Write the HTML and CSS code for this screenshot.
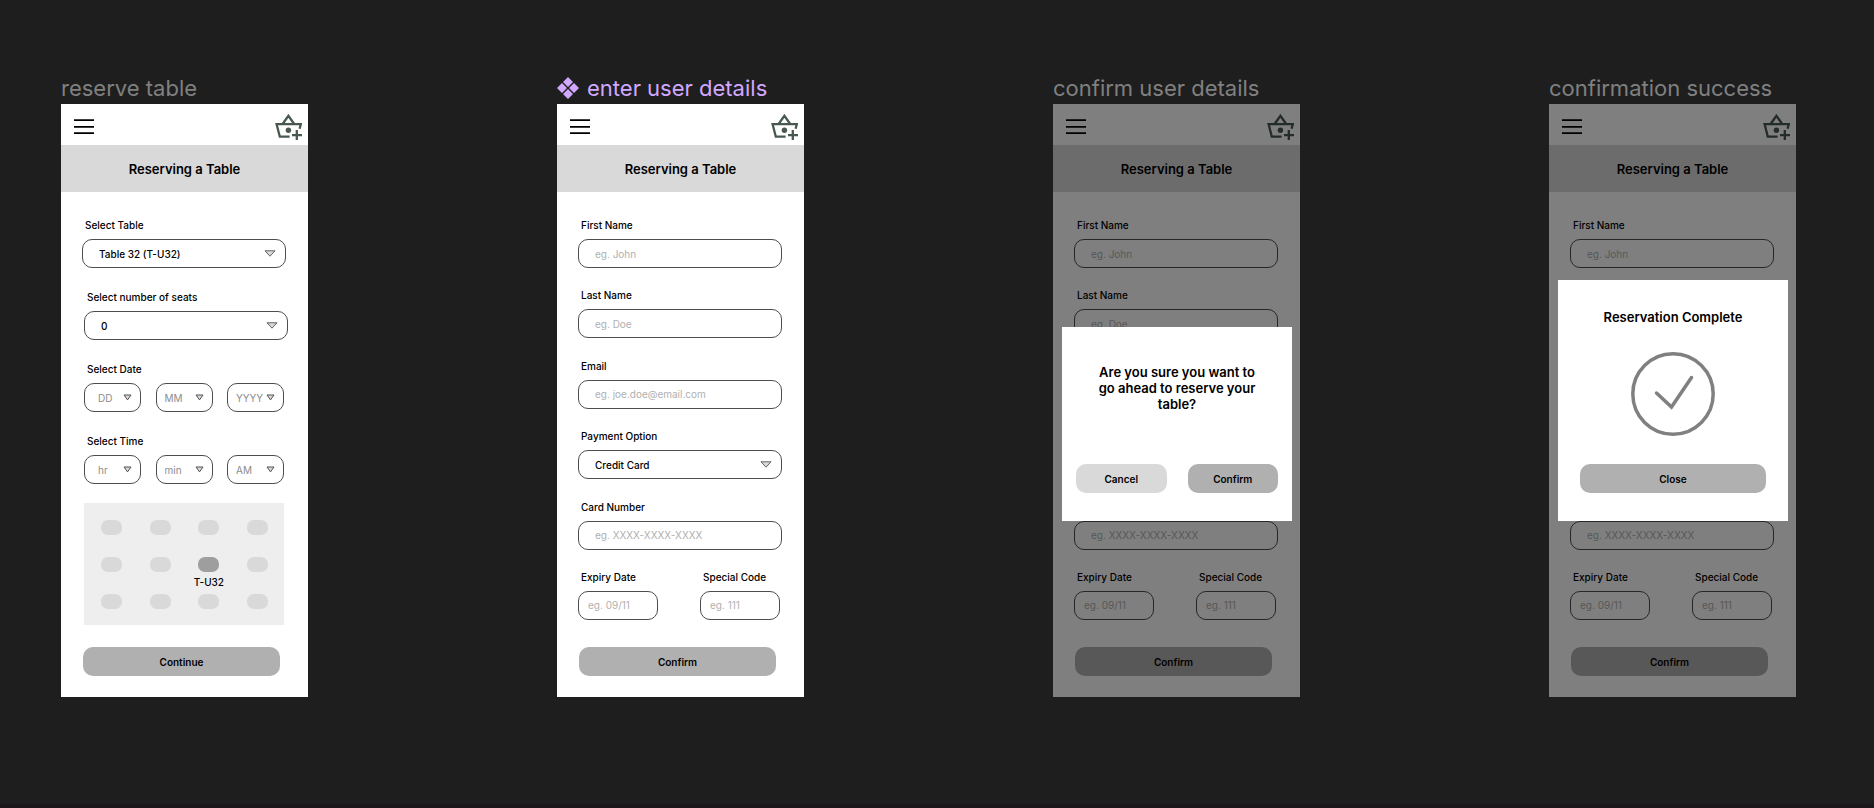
FILE: index.html
```html
<!DOCTYPE html>
<html lang="en">
<head>
<meta charset="utf-8">
<meta name="viewport" content="width=device-width, initial-scale=1">
<title>Table reservation flow</title>
<link rel="stylesheet" href="styles.css">
</head>
<body>
<svg class="sprite" aria-hidden="true">
  <symbol id="menu" viewBox="0 0 20 16"><path d="M0 1.2h20M0 7.800h20M0 14.2h20" fill="none" stroke="#000" stroke-width="1.700"/></symbol>
  <symbol id="basket" viewBox="0 0 27 26"><g fill="none" stroke="#48594f" stroke-width="2.300"><path d="M14.6 22.6H4.8L1.6 10.2h24.2l-1.2 4.6"/><path d="M7.6 10l5.8-8.2L19.2 10"/><path d="M21.8 16v10M17 21.2h10"/></g><circle cx="13.4" cy="16.2" r="2.700" fill="#48594f"/></symbol>
  <symbol id="arrow" viewBox="0 0 12 7"><path d="M1 .8h10L6 6.2z" fill="#d9d9d9" stroke="#555" stroke-width=".9"/></symbol>
  <symbol id="arrow-small" viewBox="0 0 9 7"><path d="M1 1h7L4.500 5.900z" fill="#d9d9d9" stroke="#444" stroke-width=".9"/></symbol>
</svg>
<main class="canvas">

  <section class="board">
    <h2 class="board-name">reserve table</h2>
    <div class="screen">
      <header class="topbar">
        <button class="icon-button" aria-label="Menu"><svg class="menu-icon"><use href="#menu"/></svg></button>
        <button class="icon-button" aria-label="Add to basket"><svg class="basket-icon"><use href="#basket"/></svg></button>
      </header>
      <h1 class="banner">Reserving a Table</h1>
      <form class="form">
        <div class="fields roomy">
          <div class="field"><label for="table">Select Table</label>
            <div class="pick"><select id="table" class="box"><option>Table 32 (T-U32)</option></select><svg class="arrow"><use href="#arrow"/></svg></div></div>
          <div class="field inset"><label for="seats">Select number of seats</label>
            <div class="pick"><select id="seats" class="box"><option>0</option></select><svg class="arrow"><use href="#arrow"/></svg></div></div>
          <div class="field inset"><label for="day">Select Date</label>
            <div class="trio">
              <div class="pick small"><select id="day" class="box"><option>DD</option></select><svg class="arrow"><use href="#arrow-small"/></svg></div>
              <div class="pick small"><select class="box" aria-label="Month"><option>MM</option></select><svg class="arrow"><use href="#arrow-small"/></svg></div>
              <div class="pick small"><select class="box" aria-label="Year"><option>YYYY</option></select><svg class="arrow"><use href="#arrow-small"/></svg></div>
            </div></div>
          <div class="field inset"><label for="hour">Select Time</label>
            <div class="trio">
              <div class="pick small"><select id="hour" class="box"><option>hr</option></select><svg class="arrow"><use href="#arrow-small"/></svg></div>
              <div class="pick small"><select class="box" aria-label="Minute"><option>min</option></select><svg class="arrow"><use href="#arrow-small"/></svg></div>
              <div class="pick small"><select class="box" aria-label="AM or PM"><option>AM</option></select><svg class="arrow"><use href="#arrow-small"/></svg></div>
            </div></div>
        </div>
        <div class="seat-map">
          <span class="seat"></span><span class="seat"></span><span class="seat"></span><span class="seat"></span>
          <span class="seat"></span><span class="seat"></span><span class="seat chosen"><span class="seat-name">T-U32</span></span><span class="seat"></span>
          <span class="seat"></span><span class="seat"></span><span class="seat"></span><span class="seat"></span>
        </div>
        <button type="button" class="action submit">Continue</button>
      </form>
    </div>
  </section>

  <section class="board">
    <h2 class="board-name component"><svg class="component-icon" viewBox="0 0 22 22"><path d="M11 0l5 5-5 5-5-5zM11 12l5 5-5 5-5-5zM5 6l5 5-5 5-5-5zM17 6l5 5-5 5-5-5z" fill="#d2a8ff"/></svg>enter user details</h2>
    <div class="screen">
      <header class="topbar">
        <button class="icon-button" aria-label="Menu"><svg class="menu-icon"><use href="#menu"/></svg></button>
        <button class="icon-button" aria-label="Add to basket"><svg class="basket-icon"><use href="#basket"/></svg></button>
      </header>
      <h1 class="banner">Reserving a Table</h1>
      <form class="form">
        <div class="fields">
          <div class="field"><label for="first-a">First Name</label><input id="first-a" class="box" placeholder="eg. John"></div>
          <div class="field"><label for="last-a">Last Name</label><input id="last-a" class="box" placeholder="eg. Doe"></div>
          <div class="field"><label for="email-a">Email</label><input id="email-a" class="box" placeholder="eg. joe.doe@email.com"></div>
          <div class="field"><label for="pay-a">Payment Option</label>
            <div class="pick"><select id="pay-a" class="box"><option>Credit Card</option></select><svg class="arrow"><use href="#arrow"/></svg></div></div>
          <div class="field"><label for="card-a">Card Number</label><input id="card-a" class="box" placeholder="eg. XXXX-XXXX-XXXX"></div>
          <div class="pair">
            <div class="field"><label for="expiry-a">Expiry Date</label><input id="expiry-a" class="box" placeholder="eg. 09/11"></div>
            <div class="field"><label for="code-a">Special Code</label><input id="code-a" class="box" placeholder="eg. 111"></div>
          </div>
        </div>
        <button type="button" class="action submit">Confirm</button>
      </form>
    </div>
  </section>

  <section class="board">
    <h2 class="board-name">confirm user details</h2>
    <div class="screen">
      <header class="topbar">
        <button class="icon-button" aria-label="Menu"><svg class="menu-icon"><use href="#menu"/></svg></button>
        <button class="icon-button" aria-label="Add to basket"><svg class="basket-icon"><use href="#basket"/></svg></button>
      </header>
      <h1 class="banner">Reserving a Table</h1>
      <form class="form">
        <div class="fields">
          <div class="field"><label for="first-b">First Name</label><input id="first-b" class="box" placeholder="eg. John"></div>
          <div class="field"><label for="last-b">Last Name</label><input id="last-b" class="box" placeholder="eg. Doe"></div>
          <div class="field"><label for="email-b">Email</label><input id="email-b" class="box" placeholder="eg. joe.doe@email.com"></div>
          <div class="field"><label for="pay-b">Payment Option</label>
            <div class="pick"><select id="pay-b" class="box"><option>Credit Card</option></select><svg class="arrow"><use href="#arrow"/></svg></div></div>
          <div class="field"><label for="card-b">Card Number</label><input id="card-b" class="box" placeholder="eg. XXXX-XXXX-XXXX"></div>
          <div class="pair">
            <div class="field"><label for="expiry-b">Expiry Date</label><input id="expiry-b" class="box" placeholder="eg. 09/11"></div>
            <div class="field"><label for="code-b">Special Code</label><input id="code-b" class="box" placeholder="eg. 111"></div>
          </div>
        </div>
        <button type="button" class="action submit">Confirm</button>
      </form>
      <div class="overlay"></div>
      <div class="modal ask" role="dialog" aria-labelledby="ask-title">
        <h3 id="ask-title" class="modal-title">Are you sure you want to go ahead to reserve your table?</h3>
        <div class="choices">
          <button type="button" class="action light">Cancel</button>
          <button type="button" class="action">Confirm</button>
        </div>
      </div>
    </div>
  </section>

  <section class="board">
    <h2 class="board-name">confirmation success</h2>
    <div class="screen">
      <header class="topbar">
        <button class="icon-button" aria-label="Menu"><svg class="menu-icon"><use href="#menu"/></svg></button>
        <button class="icon-button" aria-label="Add to basket"><svg class="basket-icon"><use href="#basket"/></svg></button>
      </header>
      <h1 class="banner">Reserving a Table</h1>
      <form class="form">
        <div class="fields">
          <div class="field"><label for="first-c">First Name</label><input id="first-c" class="box" placeholder="eg. John"></div>
          <div class="field"><label for="last-c">Last Name</label><input id="last-c" class="box" placeholder="eg. Doe"></div>
          <div class="field"><label for="email-c">Email</label><input id="email-c" class="box" placeholder="eg. joe.doe@email.com"></div>
          <div class="field"><label for="pay-c">Payment Option</label>
            <div class="pick"><select id="pay-c" class="box"><option>Credit Card</option></select><svg class="arrow"><use href="#arrow"/></svg></div></div>
          <div class="field"><label for="card-c">Card Number</label><input id="card-c" class="box" placeholder="eg. XXXX-XXXX-XXXX"></div>
          <div class="pair">
            <div class="field"><label for="expiry-c">Expiry Date</label><input id="expiry-c" class="box" placeholder="eg. 09/11"></div>
            <div class="field"><label for="code-c">Special Code</label><input id="code-c" class="box" placeholder="eg. 111"></div>
          </div>
        </div>
        <button type="button" class="action submit">Confirm</button>
      </form>
      <div class="overlay"></div>
      <div class="modal done" role="dialog" aria-labelledby="done-title">
        <h3 id="done-title" class="modal-title">Reservation Complete</h3>
        <svg class="check-icon" viewBox="0 0 84 84"><g fill="none" stroke="#808080" stroke-width="3.500"><circle cx="42" cy="42" r="40.200"/><path d="M25.500 41L40.500 55L60.500 25.500" stroke-linecap="round"/></g></svg>
        <button type="button" class="action">Close</button>
      </div>
    </div>
  </section>

</main>
</body>
</html>
```
FILE: styles.css
```css
* { box-sizing: border-box; }

body {
  margin: 0;
  min-height: 100vh;
  background: #1e1e1e;
  border-bottom: 4px solid #1b171b;
  color: #000;
  font-family: Inter, "Liberation Sans", sans-serif;
  font-size: 10px;
}

button, input, select { font: inherit; color: inherit; }

.sprite { display: none; }

.canvas {
  display: flex;
  justify-content: space-between;
  padding: 72px 78px 80px 61px;
}

.board {
  display: flex;
  flex-direction: column;
  width: 247px;
}

.board-name {
  display: flex;
  align-items: center;
  gap: 8px;
  margin: 0;
  height: 32px;
  color: #808080;
  font-size: 22px;
  font-weight: 400;
  white-space: nowrap;
}

.component { color: #d2a8ff; }
.component-icon { width: 22px; height: 22px; }

.screen {
  position: relative;
  display: flex;
  flex: 1;
  flex-direction: column;
  background: #fff;
}

.topbar {
  display: flex;
  align-items: center;
  justify-content: space-between;
  height: 41px;
  padding: 5px 6px 0 13px;
}

.icon-button {
  display: flex;
  padding: 0;
  border: 0;
  background: none;
}

.menu-icon { width: 20px; height: 16px; }
.basket-icon { width: 27px; height: 26px; }

.banner {
  margin: 0;
  padding-top: 2px;
  background: #d9d9d9;
  font-size: 13px;
  font-weight: 600;
  line-height: 45px;
  text-align: center;
}

.form {
  display: flex;
  flex: 1;
  flex-direction: column;
  padding: 25px 22px 21px 21px;
}

.fields {
  display: flex;
  flex: 1;
  flex-direction: column;
  justify-content: space-between;
  gap: 19px;
}

.roomy { gap: 21px; }

.field {
  display: flex;
  flex-direction: column;
  gap: 6px;
}

.field label {
  padding-left: 3px;
  font-weight: 500;
  line-height: 16px;
}

.inset { margin: 0 -2px 0 2px; }

.box {
  appearance: none;
  width: 100%;
  height: 29px;
  padding: 0 16px;
  border: 1px solid #4d4d4d;
  border-radius: 10px;
  background: none;
  font-weight: 500;
}

.box::placeholder {
  color: #b0b0b0;
  font-weight: 400;
  opacity: 1;
}

.pick {
  display: grid;
  align-items: center;
}

.pick > * { grid-area: 1 / 1; }

.arrow {
  justify-self: end;
  width: 12px;
  height: 7px;
  margin-right: 10px;
  pointer-events: none;
}

.trio {
  display: grid;
  grid-template-columns: repeat(3, 57px);
  justify-content: space-between;
  margin-right: 4px;
}

.small .box {
  padding: 0 8px;
  color: #8c8c8c;
  font-weight: 400;
}

.small:nth-child(1) .box { padding-left: 13px; }
.small .arrow { width: 9px; margin-right: 9px; }

.pair {
  display: grid;
  grid-template-columns: 80px 80px;
  justify-content: space-between;
  padding-right: 2px;
}

.pair .box { padding: 0 9px; }

.seat-map {
  display: grid;
  grid-template-columns: repeat(4, 21px);
  justify-content: space-between;
  row-gap: 22px;
  margin: 19px 2px 0;
  padding: 17px 16px 16px 17px;
  background: #eee;
}

.seat {
  position: relative;
  height: 15px;
  border-radius: 7px;
  background: #d9d9d9;
}

.chosen { background: #9e9e9e; }

.seat-name {
  position: absolute;
  top: 100%;
  left: 50%;
  transform: translateX(-50%);
  font-weight: 500;
  line-height: 20px;
  white-space: nowrap;
}

.action {
  height: 29px;
  padding: 0;
  border: 0;
  border-radius: 10px;
  background: #b0b0b0;
  font-weight: 600;
}

.light { background: #d9d9d9; }

.submit { margin: 27px 6px 0 1px; }
.seat-map + .submit { margin-top: 22px; }

.overlay {
  position: absolute;
  inset: 0;
  background: rgba(0, 0, 0, 0.5);
}

.modal {
  position: absolute;
  right: 8px;
  bottom: 176px;
  left: 9px;
  display: flex;
  flex-direction: column;
  background: #fff;
}

.modal-title {
  margin: 0;
  font-size: 13px;
  font-weight: 600;
  line-height: 16px;
  text-align: center;
}

.ask { padding: 37px 14px 28px; }
.ask .modal-title { padding: 0 14px; }

.choices {
  display: grid;
  grid-template-columns: 1fr 1fr;
  gap: 21px;
  margin-top: 52px;
}

.done { padding: 29px 22px 28px; }

.check-icon {
  align-self: center;
  width: 84px;
  height: 84px;
  margin: 27px 0 28px;
}
```
